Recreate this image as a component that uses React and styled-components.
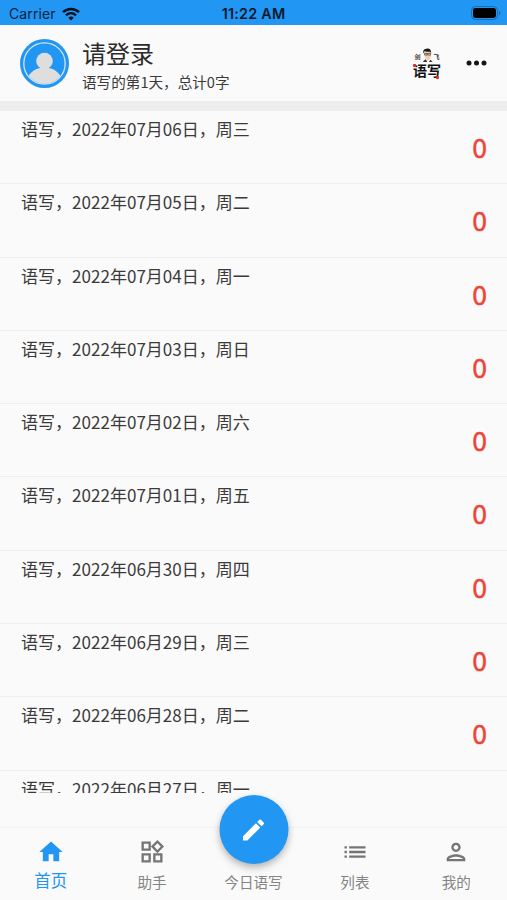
import React from 'react';
import styled, { createGlobalStyle } from 'styled-components';
import {
  MdHome,
  MdOutlineWidgets,
  MdList,
  MdOutlinePerson,
  MdEdit,
} from 'react-icons/md';

const GlobalStyle = createGlobalStyle`
  body {
    margin: 0;
    background: #fafafa;
    color: #3a3a3a;
    font-family: "Noto Sans CJK SC", sans-serif;
  }

  svg {
    display: block;
  }
`;

const Screen = styled.div`
  width: 507px;
  height: 900px;
  display: flex;
  flex-direction: column;
  overflow: hidden;
  background: #fafafa;
`;

const StatusBar = styled.div`
  height: 25px;
  flex-shrink: 0;
  display: grid;
  grid-template-columns: 1fr auto 1fr;
  align-items: center;
  box-sizing: border-box;
  padding: 2px 6px 0 9px;
  background: #2196f3;
  color: #0b2238;
  font-family: Inter, sans-serif;
  font-size: 14px;
  line-height: 20px;
`;

const Carrier = styled.div`
  display: flex;
  align-items: center;
  gap: 6px;
  letter-spacing: 0.1px;
`;

const Clock = styled.div`
  margin-left: -3px;
  color: #07192a;
  font-weight: 600;
  font-size: 14.3px;
  letter-spacing: 0.25px;
`;

const Battery = styled.div`
  justify-self: end;
  margin-top: -2px;
`;

const Header = styled.header`
  height: 76px;
  flex-shrink: 0;
  display: flex;
  align-items: center;
  box-sizing: border-box;
  padding: 0 18px 0 20px;
`;

const Account = styled.div`
  flex: 1;
  margin-left: 13px;
  padding-top: 4px;
`;

const AccountName = styled.div`
  font-size: 24px;
  line-height: 32px;
  color: #2b2b2b;
`;

const AccountStats = styled.div`
  font-size: 14.6px;
  line-height: 25px;
`;

const MoreButton = styled.div`
  margin-left: 19px;
  color: #151515;
`;

const Divider = styled.div`
  height: 10px;
  flex-shrink: 0;
  background: #eee;
`;

const List = styled.ul`
  height: 682px;
  flex-shrink: 0;
  margin: 0;
  padding: 0;
  overflow: hidden;
  list-style: none;
`;

const Entry = styled.li`
  height: 73.3px;
  display: flex;
  justify-content: space-between;
  box-sizing: border-box;
  padding: 0 20px 0 21px;
  border-bottom: 1px solid #efefef;
`;

const EntryTitle = styled.div`
  margin-top: 5px;
  font-size: 17.05px;
  line-height: 25px;
`;

const EntryCount = styled.div`
  margin-top: 17px;
  color: #ee4438;
  font-size: 26.6px;
  line-height: 38px;
  -webkit-text-stroke: 0.5px #ee4438;
`;

const BottomBar = styled.nav`
  flex: 1;
  margin-top: 35px;
  display: grid;
  grid-template-columns: repeat(5, 1fr);
  position: relative;
  box-shadow: 0 -1px 2px rgba(0, 0, 0, 0.04);
`;

const Tab = styled.div`
  display: flex;
  flex-direction: column;
  align-items: center;
  padding-top: 10px;
  color: ${props => (props.$active ? '#2196f3' : '#757575')};
`;

const TabIcon = styled.div`
  height: 28px;
`;

const TabLabel = styled.div`
  margin-top: ${props => (props.$active ? '2px' : '4px')};
  color: ${props => (props.$active ? '#2196f3' : '#858585')};
  font-size: ${props => (props.$active ? '16.5px' : '14.6px')};
  line-height: 24px;
`;

const WriteButton = styled.div`
  position: absolute;
  top: -33px;
  left: 50%;
  width: 69px;
  height: 69px;
  display: flex;
  align-items: center;
  justify-content: center;
  transform: translateX(-50%);
  border-radius: 50%;
  background: #2196f3;
  color: #fff;
  box-shadow: 0 3px 6px rgba(0, 0, 0, 0.22), 0 5px 11px rgba(0, 0, 0, 0.09);
`;

const Brand = styled.div`
  width: 30px;
  margin-right: 2px;
  display: flex;
  flex-direction: column;
  align-items: center;
`;

const BrandTop = styled.div`
  display: flex;
  align-items: flex-end;
  gap: 1px;
  height: 14px;
  color: #333;
  font-size: 6px;
  font-weight: 700;
  line-height: 10px;
`;

const BrandName = styled.div`
  color: #111;
  font-size: 14px;
  font-weight: 700;
  line-height: 17px;
  position: relative;
`;

const RedMark = styled.span`
  position: absolute;
  top: ${props => props.$top}px;
  left: ${props => props.$left}px;
  width: 3px;
  height: 3px;
  border-radius: 1px;
  background: #e12c2c;
`;

const entries = [
  '语写，2022年07月06日，周三',
  '语写，2022年07月05日，周二',
  '语写，2022年07月04日，周一',
  '语写，2022年07月03日，周日',
  '语写，2022年07月02日，周六',
  '语写，2022年07月01日，周五',
  '语写，2022年06月30日，周四',
  '语写，2022年06月29日，周三',
  '语写，2022年06月28日，周二',
  '语写，2022年06月27日，周一',
];

const tabs = [
  { label: '首页', icon: MdHome, active: true },
  { label: '助手', icon: MdOutlineWidgets },
  { label: '今日语写' },
  { label: '列表', icon: MdList },
  { label: '我的', icon: MdOutlinePerson },
];

function WifiIcon() {
  return (
    <svg width="18" height="14" viewBox="0 0 18 14" fill="none" stroke="#07121d" strokeWidth="2.5">
      <path d="M1 5.2C5.5 .8 12.5 .8 17 5.2" />
      <path d="M4 8.3C6.9 5.6 11.1 5.6 14 8.3" />
      <path d="M6.3 10.7C7.8 9.2 10.2 9.2 11.7 10.7L9 13.5Z" fill="#07121d" stroke="none" />
    </svg>
  );
}

function BatteryIcon() {
  return (
    <svg width="30" height="14" viewBox="0 0 30 14">
      <rect x="0.5" y="0.5" width="26" height="13" rx="4" fill="none" stroke="#176cb2" />
      <rect x="2" y="2" width="23" height="10" rx="2.4" fill="#000" />
      <path d="M28 5V9C30 8.2 30 5.8 28 5Z" fill="#176cb2" />
    </svg>
  );
}

function Avatar() {
  return (
    <svg width="49" height="49" viewBox="0 0 49 49">
      <defs>
        <clipPath id="face">
          <circle cx="24.5" cy="24.5" r="20.2" />
        </clipPath>
      </defs>
      <circle cx="24.5" cy="24.5" r="24.5" fill="#2196f3" />
      <circle cx="24.5" cy="24.5" r="20.7" fill="none" stroke="#d7e5ef" strokeWidth="1.3" />
      <g fill="#dedede" clipPath="url(#face)">
        <circle cx="24.5" cy="22" r="8.3" />
        <path d="M20 28H29V29C35 30 39 34 41 38V49H8V38C10 34 14 30 20 29Z" />
      </g>
    </svg>
  );
}

function Logo() {
  return (
    <Brand>
      <BrandTop>
        <span>剑</span>
        <svg width="11" height="14" viewBox="0 0 11 15">
          <path d="M2 4Q5.5 0 9 4V10Q8 14 5 13Q2 11 2 7Z" fill="#f0cfae" />
          <path d="M1.2 6Q0 1.5 4 .7Q9.5-.7 9.5 6L8.4 4Q5 4.5 2.5 3.2Z" fill="#171717" />
          <path d="M2.2 5.8H5V7.6H2.5ZM6 5.8H8.8V7.6H6ZM5 6.4H6" fill="none" stroke="#222" strokeWidth=".6" />
          <path d="M1 14L3.5 12L5.3 15H1ZM7 15L8.8 12.5L11 15Z" fill="#333" />
        </svg>
        <span>飞</span>
      </BrandTop>
      <BrandName>
        语写
        <RedMark $top={2} $left={0} />
        <RedMark $top={14} $left={23} />
      </BrandName>
    </Brand>
  );
}

export default function App() {
  return (
    <Screen>
      <GlobalStyle />
      <StatusBar>
        <Carrier>
          Carrier
          <WifiIcon />
        </Carrier>
        <Clock>11:22 AM</Clock>
        <Battery><BatteryIcon /></Battery>
      </StatusBar>
      <Header>
        <Avatar />
        <Account>
          <AccountName>请登录</AccountName>
          <AccountStats>语写的第1天，总计0字</AccountStats>
        </Account>
        <Logo />
        <MoreButton>
          <svg width="26" height="26" viewBox="0 0 26 26" fill="currentColor">
            <circle cx="6" cy="13" r="2.5" />
            <circle cx="13.5" cy="13" r="2.5" />
            <circle cx="21" cy="13" r="2.5" />
          </svg>
        </MoreButton>
      </Header>
      <Divider />
      <List>
        {entries.map(title => (
          <Entry key={title}>
            <EntryTitle>{title}</EntryTitle>
            <EntryCount>0</EntryCount>
          </Entry>
        ))}
      </List>
      <BottomBar>
        {tabs.map(({ label, icon: Icon, active }) => (
          <Tab key={label} $active={active}>
            <TabIcon>{Icon && <Icon size={28} />}</TabIcon>
            <TabLabel $active={active}>{label}</TabLabel>
          </Tab>
        ))}
        <WriteButton><MdEdit size={28} /></WriteButton>
      </BottomBar>
    </Screen>
  );
}
